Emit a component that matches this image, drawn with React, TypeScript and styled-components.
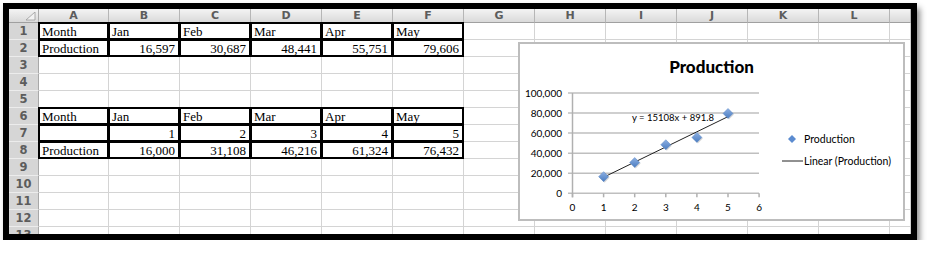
import styled, { createGlobalStyle, css } from "styled-components";

const GlobalStyle = createGlobalStyle`
  *, *::before, *::after { box-sizing: border-box; }
  html, body { margin: 0; padding: 0; background: #fff; }
`;

const COLS = ["A", "B", "C", "D", "E", "F", "G", "H", "I", "J", "K", "L", ""];

const Frame = styled.div`
  position: relative;
  margin: 3px 0 0 3px;
  width: 914px;
  height: 237px;
  border: 6px solid #000;
  box-shadow: 3px 5px 6px rgba(0, 0, 0, 0.45);
  overflow: hidden;
  background: #fff;
`;

const Sheet = styled.div`
  display: grid;
  grid-template-columns: 30px 70px repeat(11, 71px) 1fr;
  grid-template-rows: 14px repeat(13, 17px);
`;

const Corner = styled.div`
  position: relative;
  background: linear-gradient(#f4f4f4, #d9d9d9);
  border-right: 1px solid #a8a8a8;
  border-bottom: 1px solid #a0a0a0;
  svg {
    position: absolute;
    right: 2px;
    bottom: 1px;
  }
`;

const ColHead = styled.div`
  display: flex;
  align-items: center;
  justify-content: center;
  background: linear-gradient(#f4f4f4, #dadada);
  border-right: 1px solid #b6b6b6;
  border-bottom: 1px solid #a0a0a0;
  font: bold 11px "DejaVu Sans", sans-serif;
  color: #5c5c5c;
`;

const RowHead = styled.div`
  display: flex;
  align-items: center;
  justify-content: center;
  background: #d6d6d6;
  border-right: 1px solid #a8a8a8;
  border-bottom: 1px solid #ececec;
  font: bold 11.5px "DejaVu Sans", sans-serif;
  color: #5c5c5c;
`;

const Cell = styled.div<{ $boxed?: boolean; $num?: boolean }>`
  position: relative;
  border-right: 1px solid #d4d4d4;
  border-bottom: 1px solid #d4d4d4;
  padding: 0 4px 0 3px;
  font: 13px "Liberation Serif", serif;
  line-height: 17px;
  color: #000;
  white-space: nowrap;
  text-align: ${(p) => (p.$num ? "right" : "left")};
  ${(p) =>
    p.$boxed &&
    css`
      &::after {
        content: "";
        position: absolute;
        inset: -1px;
        border: 2px solid #000;
        pointer-events: none;
      }
    `}
`;

const ChartBox = styled.div`
  position: absolute;
  left: 509px;
  top: 33px;
  width: 387px;
  height: 179px;
  border: 2px solid #bdbdbd;
  background: #fff;
  display: flex;
  flex-direction: column;
  font-family: Lato, "Liberation Sans", sans-serif;
`;

const ChartTitle = styled.div`
  height: 33px;
  padding-top: 13px;
  line-height: 20px;
  text-align: center;
  font-weight: 900;
  font-size: 17px;
  color: #000;
`;

const ChartBody = styled.div`
  display: flex;
  flex: 1;
`;

const Legend = styled.div`
  display: flex;
  flex-direction: column;
  padding-top: 51px;
`;

const LegendItem = styled.div`
  display: flex;
  align-items: center;
  height: 22px;
  font-size: 10.5px;
  color: #000;
  svg {
    flex: none;
  }
`;

const table1 = [
  ["Month", "Jan", "Feb", "Mar", "Apr", "May"],
  ["Production", "16,597", "30,687", "48,441", "55,751", "79,606"],
];
const table2 = [
  ["Month", "Jan", "Feb", "Mar", "Apr", "May"],
  ["", "1", "2", "3", "4", "5"],
  ["Production", "16,000", "31,108", "46,216", "61,324", "76,432"],
];

const grid: Record<number, string[]> = {
  1: table1[0],
  2: table1[1],
  6: table2[0],
  7: table2[1],
  8: table2[2],
};

const points = [16597, 30687, 48441, 55751, 79606];
const sx = (x: number) => 52.5 + x * 31.1;
const sy = (v: number) => 116.3 - (v / 1000) * 1.003;

const Diamond = ({ cx, cy }: { cx: number; cy: number }) => (
  <g>
    <path
      d={`M${cx + 1} ${cy - 4} L${cx + 6} ${cy + 1} L${cx + 1} ${cy + 6} L${cx - 4} ${cy + 1} Z`}
      fill="rgba(0,0,0,0.15)"
    />
    <path
      d={`M${cx} ${cy - 5} L${cx + 5} ${cy} L${cx} ${cy + 5} L${cx - 5} ${cy} Z`}
      fill="url(#dia)"
      stroke="#5b86c4"
      strokeWidth="0.5"
    />
  </g>
);

const Plot = () => {
  const yTicks = [0, 20000, 40000, 60000, 80000, 100000];
  return (
    <svg width="255" height="138" viewBox="0 0 255 138">
      <defs>
        <linearGradient id="dia" x1="0" y1="0" x2="0" y2="1">
          <stop offset="0" stopColor="#8db0e3" />
          <stop offset="1" stopColor="#4a7cc0" />
        </linearGradient>
      </defs>
      {yTicks.map((v) => (
        <g key={v}>
          <line x1="48" x2="239" y1={sy(v)} y2={sy(v)} stroke="#bfbfbf" strokeWidth="1.5" />
          <text
            x="42"
            y={sy(v) + 3.5}
            textAnchor="end"
            fontSize="10"
            fontFamily="Lato, 'Liberation Sans', sans-serif"
            fill="#000"
          >
            {v.toLocaleString("en-US")}
          </text>
        </g>
      ))}
      <line x1={sx(0)} x2={sx(0)} y1={sy(100000)} y2={sy(0) + 4} stroke="#b0b0b0" strokeWidth="1.5" />
      {[0, 1, 2, 3, 4, 5, 6].map((x) => (
        <g key={x}>
          <line x1={sx(x)} x2={sx(x)} y1={sy(0)} y2={sy(0) + 4} stroke="#b0b0b0" strokeWidth="1.5" />
          <text
            x={sx(x)}
            y="134"
            textAnchor="middle"
            fontSize="10"
            fontFamily="Lato, 'Liberation Sans', sans-serif"
            fill="#000"
          >
            {x}
          </text>
        </g>
      ))}
      <line
        x1={sx(1)}
        y1={sy(15108 + 891.8)}
        x2={sx(5)}
        y2={sy(15108 * 5 + 891.8)}
        stroke="#222"
        strokeWidth="1"
      />
      {points.map((v, i) => (
        <Diamond key={i} cx={sx(i + 1)} cy={sy(v)} />
      ))}
      <text x="112" y="44" fontSize="9.5" fontFamily="Lato, 'Liberation Sans', sans-serif" fill="#000">
        y = 15108x + 891.8
      </text>
    </svg>
  );
};

const Chart = () => (
  <ChartBox>
    <ChartTitle>Production</ChartTitle>
    <ChartBody>
      <Plot />
      <Legend>
        <LegendItem>
          <svg width="29" height="22" viewBox="0 0 29 22">
            <path d="M17 7 L21 11 L17 15 L13 11 Z" fill="#5b8bd0" />
          </svg>
          Production
        </LegendItem>
        <LegendItem>
          <svg width="29" height="22" viewBox="0 0 29 22">
            <line x1="7" x2="28" y1="11" y2="11" stroke="#222" strokeWidth="1" />
          </svg>
          Linear (Production)
        </LegendItem>
      </Legend>
    </ChartBody>
  </ChartBox>
);

const isNumber = (v: string) => /^[\d,.]+$/.test(v);

export default function App() {
  const rows = Array.from({ length: 13 }, (_, i) => i + 1);
  return (
    <>
      <GlobalStyle />
      <Frame>
        <Sheet>
          <Corner>
            <svg width="10" height="9" viewBox="0 0 10 9">
              <path d="M9 0 L9 8 L0 8 Z" fill="#f2f2f2" stroke="#9a9a9a" strokeWidth="0.8" />
            </svg>
          </Corner>
          {COLS.map((c, i) => (
            <ColHead key={i}>{c}</ColHead>
          ))}
          {rows.map((r) => {
            const data = grid[r];
            return [
              <RowHead key={`h${r}`}>{r}</RowHead>,
              ...COLS.map((_, ci) => {
                const value = data && ci < 6 ? data[ci] : "";
                return (
                  <Cell key={`${ci}-${r}`} $boxed={!!data && ci < 6} $num={isNumber(value)}>
                    {value}
                  </Cell>
                );
              }),
            ];
          })}
        </Sheet>
        <Chart />
      </Frame>
    </>
  );
}
